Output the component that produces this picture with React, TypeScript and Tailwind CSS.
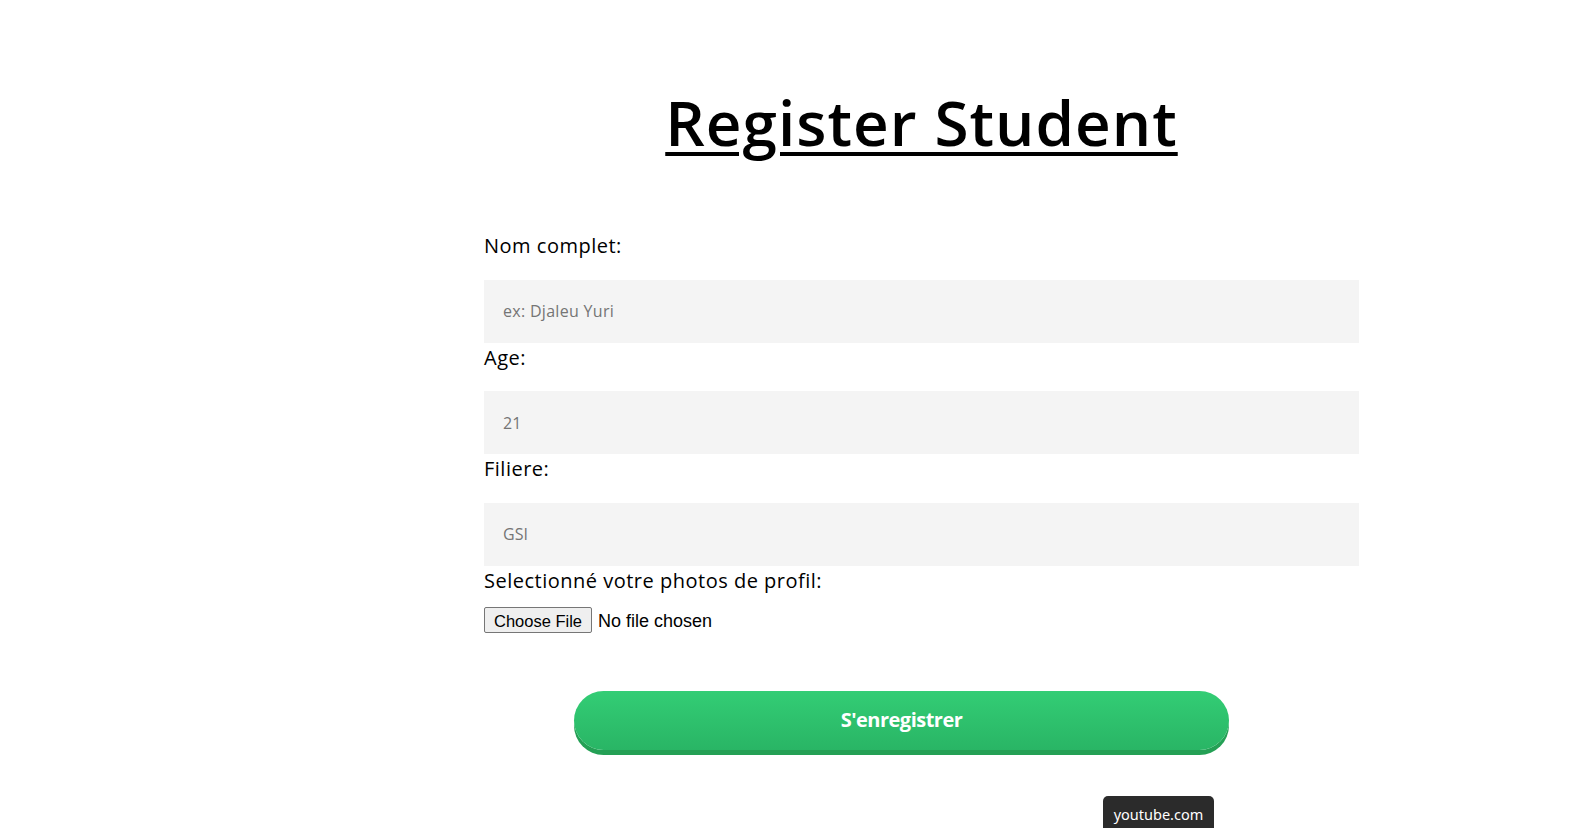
import { useState } from 'react';

export default function App() {
  const [nom, setNom] = useState('');
  const [age, setAge] = useState('');
  const [filiere, setFiliere] = useState('');

  return (
    <div className="relative min-h-screen bg-white font-['Open_Sans',sans-serif] text-black overflow-hidden">
      <div className="ml-[484px] w-[875px] pt-[84px]">
        <h1 className="text-center text-[62px] leading-[76px] font-semibold underline decoration-[4px] underline-offset-[6px] tracking-[1px]">
          Register Student
        </h1>

        <form className="mt-[71px] flex flex-col" onSubmit={e => e.preventDefault()}>
          <label className="block text-[20px] leading-[30px] tracking-[0.5px]">Nom complet:</label>
          <input
            value={nom}
            onChange={e => setNom(e.target.value)}
            placeholder="ex: Djaleu Yuri"
            className="mt-[18.5px] h-[63px] w-full bg-[#f4f4f4] px-[19px] text-[16px] tracking-[0.3px] outline-none placeholder:text-[#757575]"
          />

          <label className="block text-[20px] leading-[30px] tracking-[0.5px]">Age:</label>
          <input
            value={age}
            onChange={e => setAge(e.target.value)}
            placeholder="21"
            className="mt-[18.5px] h-[63px] w-full bg-[#f4f4f4] px-[19px] text-[16px] outline-none placeholder:text-[#757575]"
          />

          <label className="block text-[20px] leading-[30px] tracking-[0.5px]">Filiere:</label>
          <input
            value={filiere}
            onChange={e => setFiliere(e.target.value)}
            placeholder="GSI"
            className="mt-[18.5px] h-[63px] w-full bg-[#f4f4f4] px-[19px] text-[16px] outline-none placeholder:text-[#757575]"
          />

          <label className="block text-[20px] leading-[30px] tracking-[0.5px]">Selectionné votre photos de profil:</label>
          <input
            type="file"
            className="mt-[11px] h-[26px] font-['Liberation_Sans',sans-serif] text-[18px] leading-[26px] file:mr-[6px] file:h-[26px] file:rounded-[2px] file:border file:border-solid file:border-[#767676] file:bg-[#efefef] file:px-[9px] file:text-[16.5px] file:text-black"
          />

          <button
            type="submit"
            className="ml-[90px] mt-[58px] h-[59px] w-[655px] rounded-full bg-gradient-to-b from-[#33cd75] to-[#29b565] text-[20px] font-bold tracking-[-0.5px] text-white shadow-[0_5px_0_#24a055]"
          >
            S'enregistrer
          </button>
        </form>
      </div>

      <div className="absolute left-[1103px] top-[796px] h-[40px] w-[111px] rounded-[5px] bg-[#2b2b2b] pt-[8px] text-center font-['Noto_Sans',sans-serif] text-[14.5px] leading-[20px] text-white">
        youtube.com
      </div>
    </div>
  );
}
